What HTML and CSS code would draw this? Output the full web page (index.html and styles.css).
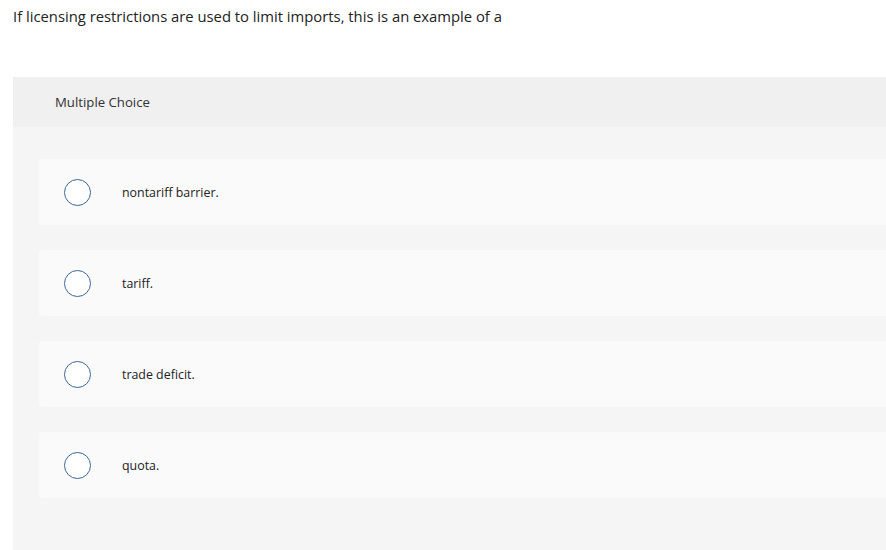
FILE: index.html
```html
<!DOCTYPE html>
<html lang="en">
<head>
<meta charset="utf-8">
<title>Multiple Choice</title>
<link rel="stylesheet" href="styles.css">
</head>
<body>
<div class="page">
  <p class="question">If licensing restrictions are used to limit imports, this is an example of a</p>
  <section class="panel">
    <header class="panel-head">Multiple Choice</header>
    <ul class="options">
      <li class="option"><span class="radio"></span><span class="label">nontariff barrier.</span></li>
      <li class="option"><span class="radio"></span><span class="label">tariff.</span></li>
      <li class="option"><span class="radio"></span><span class="label">trade deficit.</span></li>
      <li class="option"><span class="radio"></span><span class="label">quota.</span></li>
    </ul>
  </section>
</div>
</body>
</html>
```

FILE: styles.css
```css
html, body {
  margin: 0;
  padding: 0;
  background: #fff;
  overflow: hidden;
}
body {
  font-family: "Open Sans", "Liberation Sans", sans-serif;
  color: #222;
}
.page {
  padding: 0 0 0 13px;
}
.question {
  margin: 0;
  padding-top: 6px;
  height: 71px;
  font-size: 14.8px;
  line-height: 20px;
  color: #222;
}
.panel {
  background: #f5f5f5;
  height: 473px;
}
.panel-head {
  background: #f0f0f0;
  height: 50px;
  display: flex;
  align-items: center;
  padding-left: 42px;
  font-size: 13.2px;
  color: #333;
}
.options {
  list-style: none;
  margin: 0;
  padding: 32px 0 0 26px;
  display: flex;
  flex-direction: column;
  gap: 25px;
}
.option {
  height: 66px;
  background: #fafafa;
  border-radius: 3px 0 0 3px;
  display: flex;
  align-items: center;
  padding-left: 25px;
}
.radio {
  width: 25px;
  height: 25px;
  border: 1.5px solid #3b6796;
  border-radius: 50%;
  background: #fff;
  flex: none;
}
.label {
  margin-left: 31px;
  font-size: 12.4px;
  color: #222;
}
```
